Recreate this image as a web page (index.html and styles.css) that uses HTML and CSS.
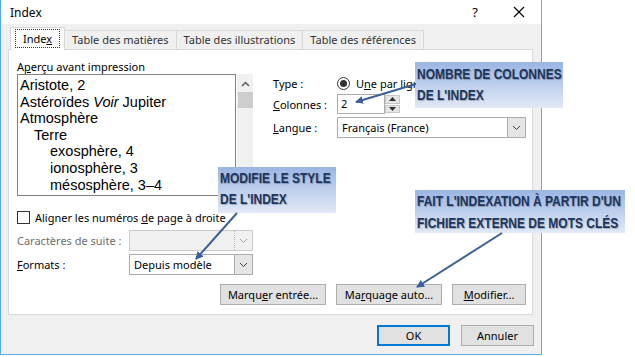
FILE: index.html
```html
<!DOCTYPE html>
<html>
<head>
    <title>Index</title>
    <link rel="stylesheet" href="styles.css">
</head>
<body>
    <div class="window">
        <div class="titlebar">
            <span class="title">Index</span>
            <span class="help">?</span>
            <svg class="close" width="12" height="12" viewBox="0 0 12 12">
                <path d="M1 1 L11 11 M11 1 L1 11" stroke="#000" stroke-width="1.1"/>
            </svg>
        </div>

        <div class="tabs">
            <div class="tab active"><span class="focus">Inde<u>x</u></span></div>
            <div class="tab">Table des matières</div>
            <div class="tab">Table des illustrations</div>
            <div class="tab">Table des références</div>
        </div>

        <div class="panel">
            <div class="left">
                <div class="caption">A<u>p</u>erçu avant impression</div>
                <div class="preview">
                    <div class="preview-text">
                        <div>Aristote, 2</div>
                        <div>Astéroïdes <i>Voir</i> Jupiter</div>
                        <div>Atmosphère</div>
                        <div class="lvl2">Terre</div>
                        <div class="lvl3">exosphère, 4</div>
                        <div class="lvl3">ionosphère, 3</div>
                        <div class="lvl3">mésosphère, 3–4</div>
                    </div>
                    <div class="scrollbar">
                        <svg class="scroll-up" width="15" height="14" viewBox="0 0 15 14">
                            <path d="M4 9 L7.5 5.5 L11 9" fill="none" stroke="#606060" stroke-width="1.5"/>
                        </svg>
                        <div class="thumb"></div>
                    </div>
                </div>

                <label class="check-row">
                    <span class="checkbox"></span>
                    <span>Aligner les numéros <u>d</u>e page à droite</span>
                </label>

                <div class="field-row">
                    <span class="field-label disabled">Caractères de suite :</span>
                    <div class="select disabled">
                        <span class="select-value"></span>
                        <span class="select-btn">
                            <svg width="9" height="6" viewBox="0 0 9 6"><path d="M1 1 L4.5 4.5 L8 1" fill="none" stroke="#a0a0a0"/></svg>
                        </span>
                    </div>
                </div>

                <div class="field-row">
                    <span class="field-label"><u>F</u>ormats :</span>
                    <div class="select">
                        <span class="select-value">Depuis modèle</span>
                        <span class="select-btn">
                            <svg width="9" height="6" viewBox="0 0 9 6"><path d="M1 1 L4.5 4.5 L8 1" fill="none" stroke="#404040"/></svg>
                        </span>
                    </div>
                </div>
            </div>

            <div class="right">
                <div class="opt-row type-row">
                    <span class="opt-label">Type :</span>
                    <span class="radio"><span class="dot"></span></span>
                    <span>U<u>n</u>e par ligne</span>
                </div>
                <div class="opt-row">
                    <span class="opt-label"><u>C</u>olonnes :</span>
                    <div class="spin">
                        <span class="spin-value">2</span>
                        <span class="spin-btns">
                            <span class="spin-btn"><svg width="7" height="4" viewBox="0 0 7 4"><path d="M0 4 L3.5 0 L7 4 Z" fill="#303030"/></svg></span>
                            <span class="spin-btn"><svg width="7" height="4" viewBox="0 0 7 4"><path d="M0 0 L3.5 4 L7 0 Z" fill="#303030"/></svg></span>
                        </span>
                    </div>
                </div>
                <div class="opt-row">
                    <span class="opt-label"><u>L</u>angue :</span>
                    <div class="select wide">
                        <span class="select-value">Français (France)</span>
                        <span class="select-btn">
                            <svg width="9" height="6" viewBox="0 0 9 6"><path d="M1 1 L4.5 4.5 L8 1" fill="none" stroke="#404040"/></svg>
                        </span>
                    </div>
                </div>
            </div>

            <div class="actions">
                <button>Marqu<u>e</u>r entrée...</button>
                <button>Ma<u>r</u>quage auto...</button>
                <button class="small"><u>M</u>odifier...</button>
            </div>
        </div>

        <div class="footer">
            <button class="ok">OK</button>
            <button>Annuler</button>
        </div>
    </div>

    <!-- annotations laid over the screenshot -->
    <div class="callout c-columns"><span>NOMBRE DE COLONNES<br>DE L'INDEX</span></div>
    <div class="callout c-style"><span>MODIFIE LE STYLE<br>DE L'INDEX</span></div>
    <div class="callout c-auto"><span>FAIT L'INDEXATION À PARTIR D'UN<br>FICHIER EXTERNE DE MOTS CLÉS</span></div>

    <svg class="arrows" width="635" height="357" viewBox="0 0 635 357">
        <defs>
            <marker id="head" markerWidth="8" markerHeight="8" refX="7" refY="4" orient="auto" markerUnits="userSpaceOnUse">
                <path d="M0 0 L8 4 L0 8 Z" fill="#3b5f98"/>
            </marker>
        </defs>
        <line x1="416" y1="84" x2="356" y2="102" stroke="#3b5f98" stroke-width="2" marker-end="url(#head)"/>
        <line x1="237" y1="213" x2="196" y2="259" stroke="#3b5f98" stroke-width="2" marker-end="url(#head)"/>
        <line x1="502" y1="233" x2="417" y2="287" stroke="#3b5f98" stroke-width="2" marker-end="url(#head)"/>
    </svg>
</body>
</html>
```

FILE: styles.css
```css
body {
    margin: 0;
    background-color: white;
    font-family: "Noto Sans", sans-serif;
    font-size: 11px;
    color: #000;
    position: relative;
    width: 635px;
    height: 357px;
    overflow: hidden;
}

.window {
    width: 542px;
    height: 355px;
    box-sizing: border-box;
    border: 1px solid #62a9e2;
    border-top: none;
    background-color: #f0f0f0;
}

.titlebar {
    height: 24px;
    background-color: white;
    display: flex;
    align-items: center;
    padding: 0 0 0 9px;
    font-size: 12px;
}

.title {
    flex: 1;
}

.help {
    font-size: 13px;
    margin-right: 35px;
}

.close {
    margin-right: 16px;
}

.tabs {
    display: flex;
    align-items: flex-end;
    padding-left: 9px;
    margin-top: 4px;
    height: 21px;
}

.tab {
    height: 18px;
    line-height: 18px;
    padding: 0 7px;
    border: 1px solid #d9d9d9;
    border-bottom: none;
    background-color: #f0f0f0;
    color: #333;
    margin-left: -1px;
}

.tab.active {
    height: 22px;
    line-height: 21px;
    background-color: white;
    color: #000;
    margin-left: 0;
    margin-bottom: -1px;
    position: relative;
    z-index: 1;
    padding: 0 4px;
}

.focus {
    border: 1px dotted #333;
    padding: 1px 7px;
}

.panel {
    width: 525px;
    height: 266px;
    margin-left: 7px;
    box-sizing: border-box;
    border: 1px solid #d9d9d9;
    background-color: white;
    padding: 9px 6px 9px 8px;
    display: grid;
    grid-template-columns: 236px 1fr;
    grid-template-rows: 1fr auto;
    column-gap: 20px;
}

.caption {
    line-height: 15px;
}

.preview {
    display: flex;
    height: 122px;
}

.preview-text {
    width: 219px;
    box-sizing: border-box;
    border: 1px solid #828282;
    padding: 2px 0 0 2px;
    font-family: "Liberation Sans", Arial, sans-serif;
    font-size: 14.5px;
    line-height: 16.6px;
    overflow: hidden;
    white-space: nowrap;
}

.lvl2 {
    padding-left: 14px;
}

.lvl3 {
    padding-left: 30px;
}

.scrollbar {
    width: 16px;
    margin-left: 1px;
    background-color: #f0f0f0;
    display: flex;
    flex-direction: column;
    align-items: center;
}

.scroll-up {
    margin-top: 3px;
}

.thumb {
    width: 15px;
    height: 16px;
    margin-top: 1px;
    background-color: #cdcdcd;
}

.check-row {
    display: flex;
    align-items: center;
    gap: 5px;
    height: 16px;
    margin-top: 13px;
}

.checkbox {
    width: 11px;
    height: 11px;
    border: 1px solid #333;
    background-color: white;
}

.field-row {
    display: flex;
    align-items: center;
    margin-top: 3px;
}

.check-row + .field-row {
    margin-top: 5px;
}

.field-label {
    width: 112px;
    white-space: nowrap;
}

.disabled {
    color: #6d6d6d;
}

.select {
    width: 124px;
    height: 21px;
    box-sizing: border-box;
    border: 1px solid #acacac;
    background-color: white;
    display: flex;
}

.select.wide {
    width: 189px;
}

.select.disabled {
    background-color: #f0f0f0;
    border-color: #cccccc;
}

.select-value {
    flex: 1;
    padding-left: 4px;
    line-height: 19px;
}

.select-btn {
    width: 17px;
    border-left: 1px solid #acacac;
    background-color: #e5e5e5;
    display: flex;
    align-items: center;
    justify-content: center;
}

.select.disabled .select-btn {
    border-left: 1px dotted #b5b5b5;
    background-color: #f0f0f0;
}

.right {
    display: flex;
    flex-direction: column;
}

.opt-row {
    display: flex;
    align-items: center;
    margin-top: 3px;
}

.type-row {
    height: 16px;
    margin-top: 16px;
}

.opt-label {
    width: 64px;
}

.radio {
    width: 11px;
    height: 11px;
    border: 1px solid #333;
    border-radius: 50%;
    display: flex;
    align-items: center;
    justify-content: center;
    margin-right: 6px;
}

.dot {
    width: 7px;
    height: 7px;
    border-radius: 50%;
    background-color: #333;
}

.spin {
    display: flex;
    height: 20px;
}

.spin-value {
    width: 48px;
    box-sizing: border-box;
    border: 1px solid #acacac;
    padding-left: 3px;
    line-height: 18px;
}

.spin-btns {
    display: flex;
    flex-direction: column;
    width: 15px;
    gap: 1px;
    padding: 1px 0;
    box-sizing: border-box;
}

.spin-btn {
    flex: 1;
    background-color: #e5e5e5;
    border: 1px solid #c8c8c8;
    display: flex;
    align-items: center;
    justify-content: center;
}

.actions {
    grid-column: 1 / span 2;
    align-self: end;
    display: flex;
    justify-content: flex-end;
    gap: 10px;
}

button {
    font-family: "Noto Sans", sans-serif;
    font-size: 11px;
    width: 106px;
    height: 21px;
    padding: 0;
    background-color: #e1e1e1;
    border: 1px solid #adadad;
    color: #000;
}

button.small {
    width: 74px;
}

.footer {
    display: flex;
    justify-content: flex-end;
    gap: 11px;
    margin-top: 10px;
    padding-right: 7px;
}

.footer button {
    width: 73px;
}

button.ok {
    border: 2px solid #0078d7;
}

.callout {
    position: absolute;
    overflow: hidden;
    background: linear-gradient(#9ab5e3, #e2e9f6);
    color: #1c365f;
    font-family: "Liberation Sans", Arial, sans-serif;
    font-weight: bold;
    font-size: 15px;
    line-height: 21px;
    padding-left: 2px;
    box-sizing: border-box;
    white-space: nowrap;
    text-shadow: 1px 1px 1px rgba(0, 0, 0, 0.25);
}

.callout span {
    display: inline-block;
    transform: scaleX(0.8);
    transform-origin: left top;
}

.c-columns {
    left: 415px;
    top: 62px;
    width: 148px;
    height: 46px;
    padding-top: 1px;
}

.c-style {
    left: 218px;
    top: 167px;
    width: 118px;
    height: 46px;
}

.c-auto {
    left: 415px;
    top: 190px;
    width: 210px;
    height: 43px;
    line-height: 22px;
}

.arrows {
    position: absolute;
    left: 0;
    top: 0;
    pointer-events: none;
}
```
